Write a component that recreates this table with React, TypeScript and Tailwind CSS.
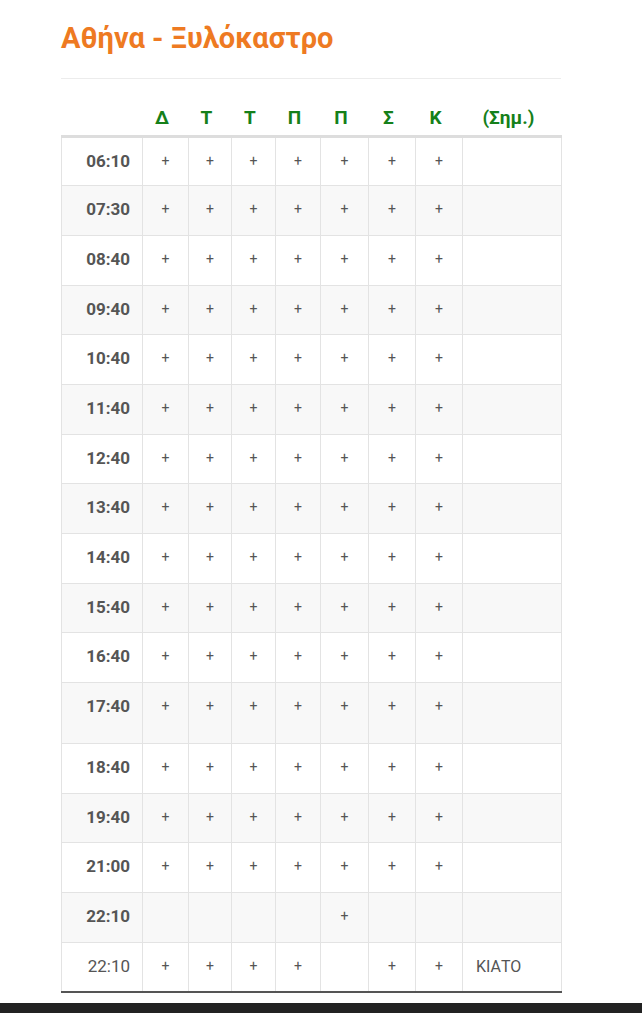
const days = ["Δ", "Τ", "Τ", "Π", "Π", "Σ", "Κ"];

type Row = { time: string; marks: boolean[]; note?: string; tall?: boolean; plain?: boolean };

const all = [true, true, true, true, true, true, true];

const rows: Row[] = [
  { time: "06:10", marks: all },
  { time: "07:30", marks: all },
  { time: "08:40", marks: all },
  { time: "09:40", marks: all },
  { time: "10:40", marks: all },
  { time: "11:40", marks: all },
  { time: "12:40", marks: all },
  { time: "13:40", marks: all },
  { time: "14:40", marks: all },
  { time: "15:40", marks: all },
  { time: "16:40", marks: all },
  { time: "17:40", marks: all, tall: true },
  { time: "18:40", marks: all },
  { time: "19:40", marks: all },
  { time: "21:00", marks: all },
  { time: "22:10", marks: [false, false, false, false, true, false, false] },
  { time: "22:10", marks: [true, true, true, true, false, true, true], note: "ΚΙΑΤΟ", plain: true },
];

const widths = ["w-[81px]", "w-[46px]", "w-[43px]", "w-[44px]", "w-[45px]", "w-[48px]", "w-[47px]", "w-[47px]", "w-[99px]"];

export default function App() {
  return (
    <div className="min-h-[1013px] bg-white font-['Roboto','Liberation_Sans',sans-serif] flex flex-col">
      <div className="w-[500px] ml-[61px] flex-1">
        {/* Route title */}
        <h1 className="pt-[20px] text-[29px] leading-[36px] font-bold text-[#ee7a22]">Αθήνα - Ξυλόκαστρο</h1>
        <div className="mt-[22px] border-t border-[#ececec]" />

        <table className="mt-[21px] w-[500px] table-fixed border-collapse">
          <colgroup>
            {widths.map((w, i) => (
              <col key={i} className={w} />
            ))}
          </colgroup>
          <thead>
            <tr className="h-[36px] border-b-[3px] border-[#dddddd]">
              <th />
              {days.map((d, i) => (
                <th key={i} className="text-center align-top pt-[4px] pr-[7px] text-[19px] font-bold text-[#15801a]">
                  {d}
                </th>
              ))}
              <th className="text-center align-top pt-[4px] pr-[7px] text-[19px] font-bold text-[#15801a]">(Σημ.)</th>
            </tr>
          </thead>
          <tbody>
            {rows.map((r, i) => (
              <tr
                key={i}
                className={`${r.tall ? "h-[61px]" : "h-[49.7px]"} ${i % 2 === 1 ? "bg-[#f8f8f8]" : "bg-white"} ${
                  i === rows.length - 1 ? "border-b-2 border-[#555555]" : ""
                }`}
              >
                <td
                  className={`border border-[#e3e3e3] align-top pt-[11px] pr-[12px] text-right text-[17px] text-[#555555] ${
                    r.plain ? "font-normal" : "font-bold"
                  }`}
                >
                  {r.time}
                </td>
                {r.marks.map((m, j) => (
                  <td key={j} className="border border-[#e3e3e3] align-top pt-[13px] text-center text-[14px] text-[#555555]">
                    {m ? "+" : ""}
                  </td>
                ))}
                <td className="border border-[#e3e3e3] align-top pt-[12px] pl-[13px] text-left text-[16px] text-[#555555]">
                  {r.note ?? ""}
                </td>
              </tr>
            ))}
          </tbody>
        </table>
      </div>
      <div className="h-[10px] bg-[#222222]" />
    </div>
  );
}
